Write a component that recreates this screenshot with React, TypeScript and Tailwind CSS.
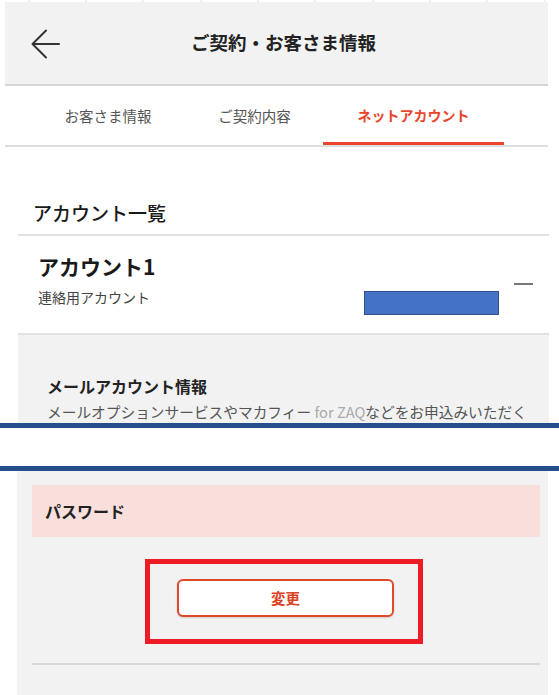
import React from "react";

const ticks = [29, 86, 143, 201, 258, 315, 373, 430, 487, 545];

export default function App() {
  return (
    <div
      className="relative w-[559px] h-[695px] overflow-hidden bg-white text-[#222]"
      style={{ fontFamily: '"Noto Sans CJK JP", "Noto Sans", sans-serif' }}
    >
      {/* top ticks */}
      <svg width="559" height="2" className="block">
        {ticks.map((x) => (
          <line key={x} x1={x} y1={0} x2={x} y2={2} stroke="#e2e2e2" strokeWidth="1" />
        ))}
      </svg>

      {/* header */}
      <div className="ml-[5px] w-[543px] h-[84px] bg-[#f2f2f2] border-b-2 border-[#d6d6d6] flex items-center relative">
        <svg width="30" height="30" viewBox="0 0 30 30" className="ml-[25px] mt-[2px]">
          <path d="M16 1.5 L2.5 15 L16 28.5 M2.5 15 H29" fill="none" stroke="#333" strokeWidth="2" strokeLinecap="round" strokeLinejoin="round" />
        </svg>
        <div className="absolute left-[186px] top-[27px] text-[18.5px] leading-[26px] font-bold text-[#222]">
          ご契約・お客さま情報
        </div>
      </div>

      {/* tabs */}
      <div className="ml-[5px] w-[543px] h-[61px] border-b-2 border-[#dedede] flex pl-[25px] text-[14.5px]">
        <div className="w-[156px] flex items-center justify-center text-[#555]">お客さま情報</div>
        <div className="w-[137px] flex items-center justify-center text-[#555]">ご契約内容</div>
        <div className="w-[181px] flex items-center justify-center text-[#e8452c] font-bold text-[14px] border-t-[3px] border-t-transparent border-b-[3px] border-b-[#e8452c]">
          ネットアカウント
        </div>
      </div>

      {/* account list title */}
      <div className="ml-[18px] w-[531px] pt-[54px] pb-[9px] border-b-2 border-[#e2e2e2]">
        <div className="pl-[15px] text-[19px] leading-[24px] font-medium text-[#1a1a1a]">アカウント一覧</div>
      </div>

      {/* account row */}
      <div className="relative ml-[18px] w-[531px] h-[99px] pt-[17px] border-b-2 border-[#e2e2e2]">
        <div className="pl-[20px] text-[21px] leading-[26px] font-bold text-[#1a1a1a]">アカウント1</div>
        <div className="pl-[20px] mt-[9px] text-[14px] leading-[18px] text-[#444]">連絡用アカウント</div>
        <div className="absolute left-[346px] top-[55px] w-[135px] h-[24px] bg-[#4472c4] border border-[#2f528f]" />
        <div className="absolute left-[496px] top-[47px] w-[19px] h-[2px] bg-[#777]" />
      </div>

      {/* mail account panel (cut) */}
      <div className="ml-[18px] w-[531px] h-[88px] bg-[#f2f2f2] overflow-hidden pt-[41px] pl-[29px]">
        <div className="text-[16px] leading-[20px] font-bold text-[#222]">メールアカウント情報</div>
        <div className="mt-[6px] text-[14.7px] leading-[20px] text-[#555] whitespace-nowrap">
          メールオプションサービスやマカフィー <span className="text-[#aaa]">for ZAQ</span>などをお申込みいただく
        </div>
      </div>

      {/* cut separators */}
      <div className="h-[5px] bg-[#254e8c]" />
      <div className="h-[38px] bg-white" />
      <div className="h-[5px] bg-[#254e8c]" />

      {/* password panel */}
      <div className="ml-[17px] w-[531px] h-[224px] bg-[#f2f2f2] pt-[14px]">
        <div className="ml-[15px] w-[508px] h-[52px] bg-[#f8dfdc] flex items-center pl-[13px]">
          <span className="text-[16px] font-bold text-[#222]">パスワード</span>
        </div>
        <div className="ml-[128px] mt-[22px] w-[278px] h-[85px] border-[5px] border-[#ed1c24] pt-[15px] pl-[27px]">
          <div className="w-[217px] h-[38px] bg-white border-2 border-[#e04a2a] rounded-[6px] shadow-[0_1px_2px_rgba(0,0,0,0.15)] flex items-center justify-center text-[14.5px] font-bold text-[#dc4326]">
            変更
          </div>
        </div>
        <div className="ml-[15px] mt-[19px] w-[508px] h-[2px] bg-[#d9d9d9]" />
      </div>
    </div>
  );
}
